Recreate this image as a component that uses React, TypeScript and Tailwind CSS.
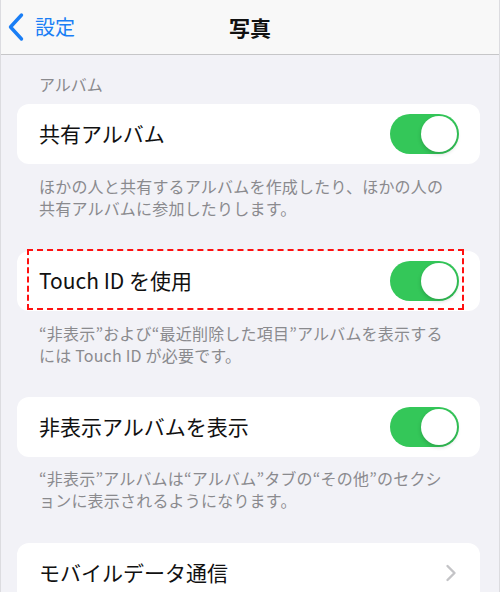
import React from "react";

const font = { fontFamily: '"Noto Sans CJK JP", "Noto Sans", sans-serif' };

function Toggle() {
  return (
    <div className="w-[69px] h-[40px] rounded-full bg-[#34c759] relative shrink-0">
      <div className="absolute right-[2px] top-[2px] w-[36px] h-[36px] rounded-full bg-white shadow-[0_2px_4px_rgba(0,0,0,0.18)]" />
    </div>
  );
}

function Card({ children, className = "" }: { children: React.ReactNode; className?: string }) {
  return (
    <div className={"mx-[16px] w-[463px] h-[60px] shrink-0 bg-white rounded-[12px] flex items-center justify-between pl-[22px] pr-[21px] relative " + className}>
      {children}
    </div>
  );
}

function Footer({ lines, className = "" }: { lines: string[]; className?: string }) {
  return (
    <div className={"shrink-0 pl-[38px] text-[16px] tracking-[0.2px] leading-[22px] text-[#8a8a8e] " + className}>
      {lines.map((l, i) => (
        <div key={i} className="whitespace-nowrap">{l}</div>
      ))}
    </div>
  );
}

export default function App() {
  return (
    <div style={font} className="w-[500px] h-[592px] overflow-hidden bg-[#f2f2f7] flex flex-col border-x border-[#dcdce0]">
      <div className="h-[55px] shrink-0 bg-[#f8f8f8] border-b border-[#c6c6c8] relative flex items-center justify-center">
        <div className="absolute left-[6px] top-0 h-[54px] flex items-center">
          <svg width="18" height="30" viewBox="0 0 18 30" className="mr-[10px]">
            <path d="M14.5 3 L3.5 15 L14.5 27" fill="none" stroke="#1a7ef5" strokeWidth="3.4" strokeLinecap="round" strokeLinejoin="round" />
          </svg>
          <span className="text-[20px] text-[#1a7ef5] leading-none">設定</span>
        </div>
        <span className="text-[21px] font-bold text-[#111] leading-none">写真</span>
      </div>

      <div className="shrink-0 pt-[18px] pl-[38px] text-[16px] leading-[22px] text-[#8a8a8e]">アルバム</div>

      <Card className="mt-[9px]">
        <span className="text-[21px] text-[#111]">共有アルバム</span>
        <Toggle />
      </Card>
      <Footer className="mt-[11px]" lines={["ほかの人と共有するアルバムを作成したり、ほかの人の", "共有アルバムに参加したりします。"]} />

      <Card className="mt-[32px]">
        <span className="text-[21px] text-[#111]">Touch ID を使用</span>
        <Toggle />
        <div className="absolute left-[10px] right-[16px] top-[-2px] bottom-[1px] border-[2px] border-dashed border-[#ff1010]" />
      </Card>
      <Footer className="mt-[11px]" lines={["“非表示”および“最近削除した項目”アルバムを表示する", "には Touch ID が必要です。"]} />

      <Card className="mt-[31px]">
        <span className="text-[21px] text-[#111]">非表示アルバムを表示</span>
        <Toggle />
      </Card>
      <Footer className="mt-[10px]" lines={["“非表示”アルバムは“アルバム”タブの“その他”のセクシ", "ョンに表示されるようになります。"]} />

      <Card className="mt-[32px]">
        <span className="text-[21px] text-[#111]">モバイルデータ通信</span>
        <svg width="12" height="18" viewBox="0 0 12 18" className="mr-[2px]">
          <path d="M2.5 2 L9.5 9 L2.5 16" fill="none" stroke="#c4c4c7" strokeWidth="2.4" strokeLinecap="round" strokeLinejoin="round" />
        </svg>
      </Card>
    </div>
  );
}
